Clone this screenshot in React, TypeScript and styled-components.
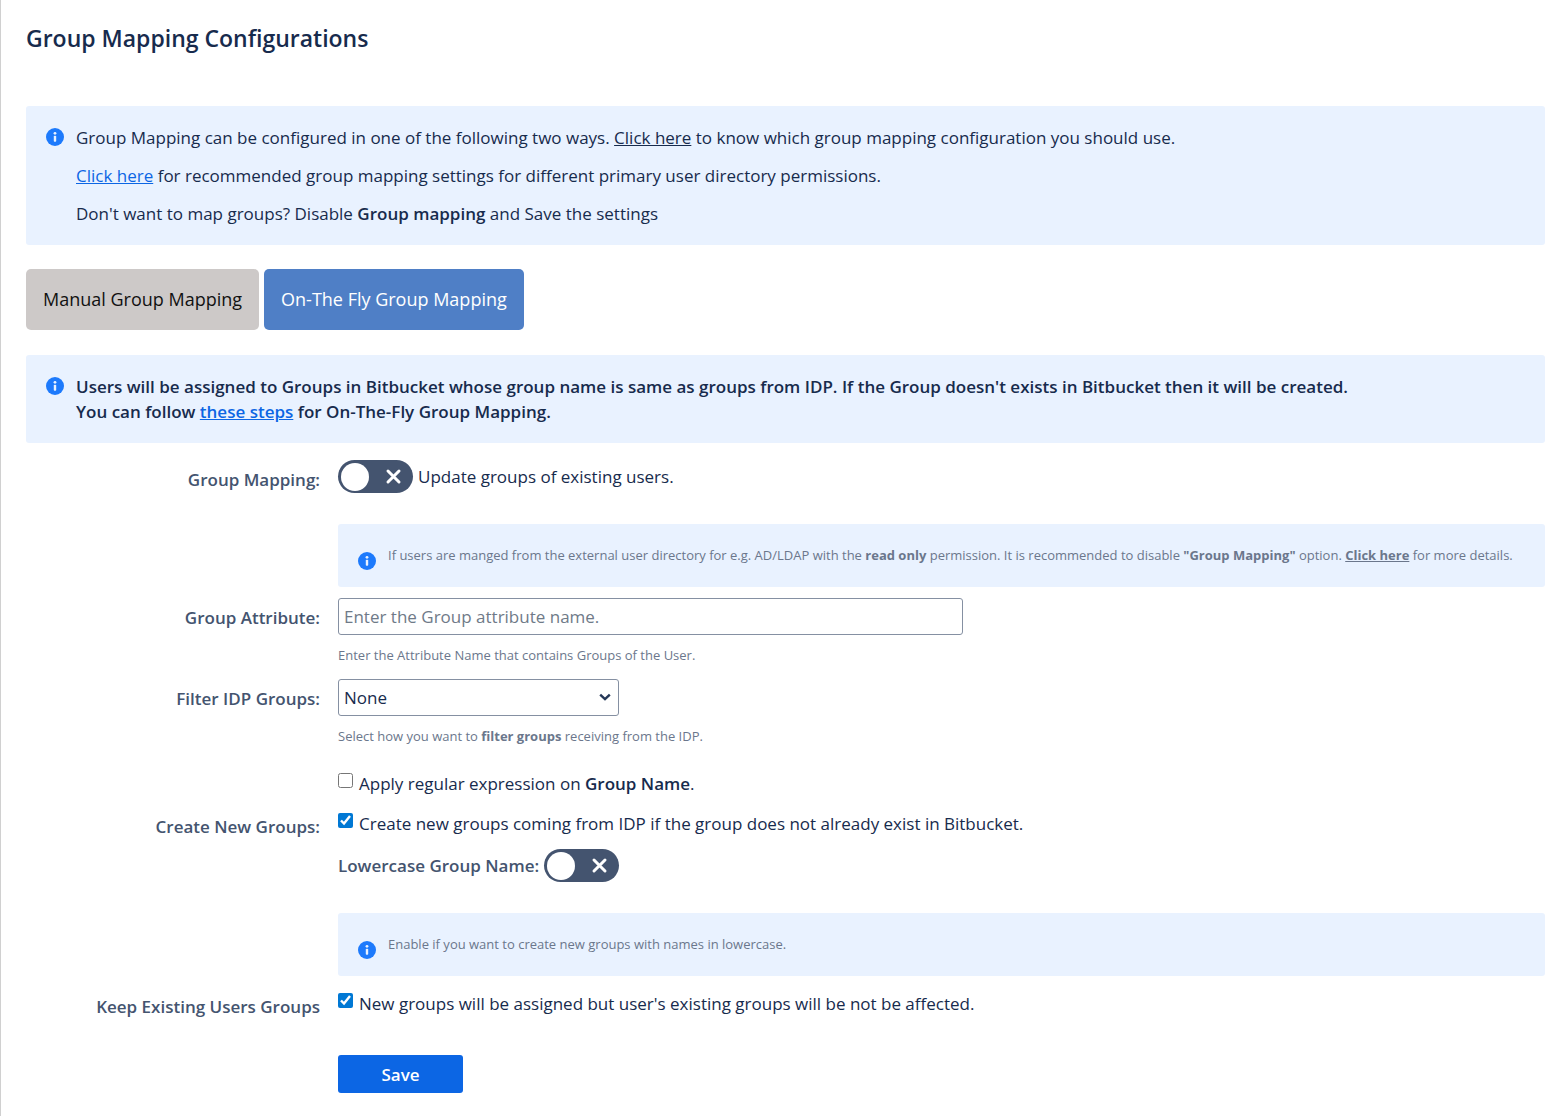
import React, { useState } from 'react';
import styled, { createGlobalStyle, css } from 'styled-components';

const GlobalStyle = createGlobalStyle`
  *, *::before, *::after { box-sizing: border-box; }
  body {
    margin: 0;
    background: #fff;
    color: #172b4d;
    font-family: "Open Sans", "Noto Sans", sans-serif;
    font-size: 17px;
    line-height: 25px;
  }
  strong { font-weight: 700; }
`;

const Page = styled.main`
  min-height: 100vh;
  padding: 23px 23px 23px 25px;
  border-left: 1px solid #d0d0d0;
`;

const Title = styled.h1`
  margin: 0 0 52px;
  font-size: 23px;
  font-weight: 600;
  line-height: 31px;
`;

const NoticeBox = styled.section<{ $small?: boolean }>`
  display: flex;
  align-items: flex-start;
  gap: 12px;
  padding: 19px 20px;
  border-radius: 3px;
  background: #e9f2ff;
  ${({ $small }) =>
    $small &&
    css`
      margin-top: 31px;
      padding-bottom: 17px;
      color: #6b778c;
      font-size: 13px;
    `}
`;

const NoticeIcon = styled.svg<{ $small?: boolean }>`
  flex: none;
  width: 18px;
  height: 18px;
  margin-top: ${({ $small }) => ($small ? 9 : 3)}px;
`;

const NoticeBody = styled.div<{ $strong?: boolean }>`
  display: flex;
  flex-direction: column;
  gap: ${({ $strong }) => ($strong ? 0 : 13)}px;
  min-width: 0;
  font-weight: ${({ $strong }) => ($strong ? 600 : 400)};
`;

const Line = styled.p`
  margin: 0;
`;

const Link = styled.a<{ $tone?: 'text' | 'blue' }>`
  color: ${({ $tone }) => ($tone === 'blue' ? '#0c66e4' : 'inherit')};
  text-decoration: underline;
`;

const Tabs = styled.div`
  display: flex;
  flex-wrap: wrap;
  gap: 5px;
  margin: 24px 0 25px;
`;

const Tab = styled.button<{ $active?: boolean }>`
  padding: 18px 17px;
  border: 0;
  border-radius: 5px;
  background: ${({ $active }) => ($active ? '#4f7fc6' : '#cdc9c8')};
  color: ${({ $active }) => ($active ? '#fff' : '#111')};
  font: inherit;
  font-size: 18px;
  cursor: pointer;
`;

const Form = styled.form`
  display: flex;
  flex-direction: column;
  gap: 11px;
  margin-top: 17px;
`;

const Row = styled.div`
  display: grid;
  grid-template-columns: 294px minmax(0, 1fr);
  column-gap: 18px;
  align-items: start;
`;

const RowLabel = styled.label`
  padding-top: 7px;
  color: #44546f;
  font-weight: 600;
  font-size: 17px;
  text-align: right;
`;

const Inline = styled.div<{ $top?: number }>`
  display: flex;
  align-items: center;
  gap: 5px;
  margin-top: ${({ $top = 0 }) => $top}px;
`;

const InlineLabel = styled.label<{ $strong?: boolean }>`
  ${({ $strong }) => $strong && 'color: #44546f; font-weight: 600;'}
`;

const CheckLine = styled.label<{ $top?: number }>`
  display: flex;
  align-items: flex-start;
  gap: 6px;
  margin-top: ${({ $top = 4 }) => $top}px;
`;

const Check = styled.input`
  flex: none;
  width: 15px;
  height: 15px;
  margin: 2px 0 0;
  accent-color: #0078d4;
`;

const Track = styled.button<{ $on: boolean }>`
  display: flex;
  flex-direction: ${({ $on }) => ($on ? 'row-reverse' : 'row')};
  align-items: center;
  justify-content: space-between;
  width: 75px;
  height: 33px;
  padding: 0 11px 0 3px;
  border: 0;
  border-radius: 17px;
  background: ${({ $on }) => ($on ? '#22a06b' : '#44546f')};
  cursor: pointer;
`;

const Knob = styled.span`
  width: 28px;
  height: 28px;
  border-radius: 50%;
  background: #fff;
`;

const TextBox = styled.input`
  display: block;
  width: 100%;
  max-width: 625px;
  height: 37px;
  padding: 0 5px;
  border: 1px solid #8590a2;
  border-radius: 3px;
  background: #fff;
  color: #172b4d;
  font: inherit;
  &::placeholder { color: #6f7a88; opacity: 1; }
`;

const SelectWrap = styled.div`
  position: relative;
  max-width: 281px;
`;

const SelectArrow = styled.svg`
  position: absolute;
  top: 12px;
  right: 8px;
  width: 12px;
  height: 12px;
  pointer-events: none;
`;

const Select = styled.select`
  display: block;
  width: 100%;
  height: 37px;
  padding: 0 24px 0 5px;
  appearance: none;
  border: 1px solid #8590a2;
  border-radius: 3px;
  background: #fff;
  color: #172b4d;
  font: inherit;
`;

const Help = styled.p`
  margin: 8px 0 0;
  color: #6b778c;
  font-size: 13px;
`;

const SaveButton = styled.button`
  justify-self: start;
  grid-column: 2;
  width: 125px;
  height: 38px;
  margin-top: 25px;
  border: 0;
  border-radius: 3px;
  background: #0c66e4;
  color: #fff;
  font: inherit;
  font-weight: 600;
  cursor: pointer;
`;

const Semibold = styled.strong`
  font-weight: 600;
`;

function Notice({ small, strong, children }: { small?: boolean; strong?: boolean; children: React.ReactNode }) {
  return (
    <NoticeBox $small={small}>
      <NoticeIcon $small={small} viewBox="0 0 18 18" aria-hidden="true">
        <circle cx="9" cy="9" r="9" fill="#1d7afc" />
        <circle cx="9" cy="5.3" r="1.4" fill="#e9f2ff" />
        <rect x="7.8" y="7.7" width="2.4" height="6" rx="0.8" fill="#e9f2ff" />
      </NoticeIcon>
      <NoticeBody $strong={strong}>{children}</NoticeBody>
    </NoticeBox>
  );
}

function Toggle({ id }: { id: string }) {
  const [on, setOn] = useState(false);
  return (
    <Track id={id} type="button" role="switch" aria-checked={on} $on={on} onClick={() => setOn(!on)}>
      <Knob />
      <svg width="17" height="17" viewBox="0 0 17 17" fill="none" stroke="#fff" strokeWidth="3" strokeLinecap="round" aria-hidden="true">
        {on ? <path d="M2.5 9l4 4 8-9" /> : <path d="M3 3l11 11M14 3L3 14" />}
      </svg>
    </Track>
  );
}

export default function App() {
  return (
    <>
      <GlobalStyle />
      <Page>
        <Title>Group Mapping Configurations</Title>
        <Notice>
          <Line>
            Group Mapping can be configured in one of the following two ways. <Link href="#which">Click here</Link> to know
            which group mapping configuration you should use.
          </Line>
          <Line>
            <Link href="#recommended" $tone="blue">Click here</Link> for recommended group mapping settings for different
            primary user directory permissions.
          </Line>
          <Line>
            Don't want to map groups? Disable <Semibold>Group mapping</Semibold> and Save the settings
          </Line>
        </Notice>
        <Tabs>
          <Tab type="button">Manual Group Mapping</Tab>
          <Tab type="button" $active>On-The Fly Group Mapping</Tab>
        </Tabs>
        <Notice strong>
          <Line>
            Users will be assigned to Groups in Bitbucket whose group name is same as groups from IDP. If the Group doesn't
            exists in Bitbucket then it will be created.
          </Line>
          <Line>
            You can follow <Link href="#steps" $tone="blue">these steps</Link> for On-The-Fly Group Mapping.
          </Line>
        </Notice>
        <Form onSubmit={(e) => e.preventDefault()}>
          <Row>
            <RowLabel htmlFor="group-mapping">Group Mapping:</RowLabel>
            <div>
              <Inline>
                <Toggle id="group-mapping" />
                <InlineLabel htmlFor="group-mapping">Update groups of existing users.</InlineLabel>
              </Inline>
              <Notice small>
                <Line>
                  If users are manged from the external user directory for e.g. AD/LDAP with the <strong>read only</strong>{' '}
                  permission. It is recommended to disable <strong>"Group Mapping"</strong> option.{' '}
                  <strong><Link href="#details">Click here</Link></strong> for more details.
                </Line>
              </Notice>
            </div>
          </Row>
          <Row>
            <RowLabel htmlFor="group-attribute">Group Attribute:</RowLabel>
            <div>
              <TextBox id="group-attribute" type="text" placeholder="Enter the Group attribute name." />
              <Help>Enter the Attribute Name that contains Groups of the User.</Help>
            </div>
          </Row>
          <Row>
            <RowLabel htmlFor="filter-groups">Filter IDP Groups:</RowLabel>
            <div>
              <SelectWrap>
                <Select id="filter-groups" defaultValue="none">
                  <option value="none">None</option>
                </Select>
                <SelectArrow viewBox="0 0 12 12" fill="none" stroke="#253858" strokeWidth="2.4" aria-hidden="true">
                  <path d="M1.2 3.6L6 8.2l4.8-4.6" />
                </SelectArrow>
              </SelectWrap>
              <Help>
                Select how you want to <strong>filter groups</strong> receiving from the IDP.
              </Help>
              <CheckLine $top={22}>
                <Check type="checkbox" />
                <span>Apply regular expression on <Semibold>Group Name</Semibold>.</span>
              </CheckLine>
            </div>
          </Row>
          <Row>
            <RowLabel htmlFor="create-groups">Create New Groups:</RowLabel>
            <div>
              <CheckLine>
                <Check id="create-groups" type="checkbox" defaultChecked />
                <span>Create new groups coming from IDP if the group does not already exist in Bitbucket.</span>
              </CheckLine>
              <Inline $top={13}>
                <InlineLabel htmlFor="lowercase" $strong>Lowercase Group Name:</InlineLabel>
                <Toggle id="lowercase" />
              </Inline>
              <Notice small>
                <Line>Enable if you want to create new groups with names in lowercase.</Line>
              </Notice>
            </div>
          </Row>
          <Row>
            <RowLabel htmlFor="keep-groups">Keep Existing Users Groups</RowLabel>
            <CheckLine>
              <Check id="keep-groups" type="checkbox" defaultChecked />
              <span>New groups will be assigned but user's existing groups will be not be affected.</span>
            </CheckLine>
          </Row>
          <Row>
            <SaveButton type="submit">Save</SaveButton>
          </Row>
        </Form>
      </Page>
    </>
  );
}
